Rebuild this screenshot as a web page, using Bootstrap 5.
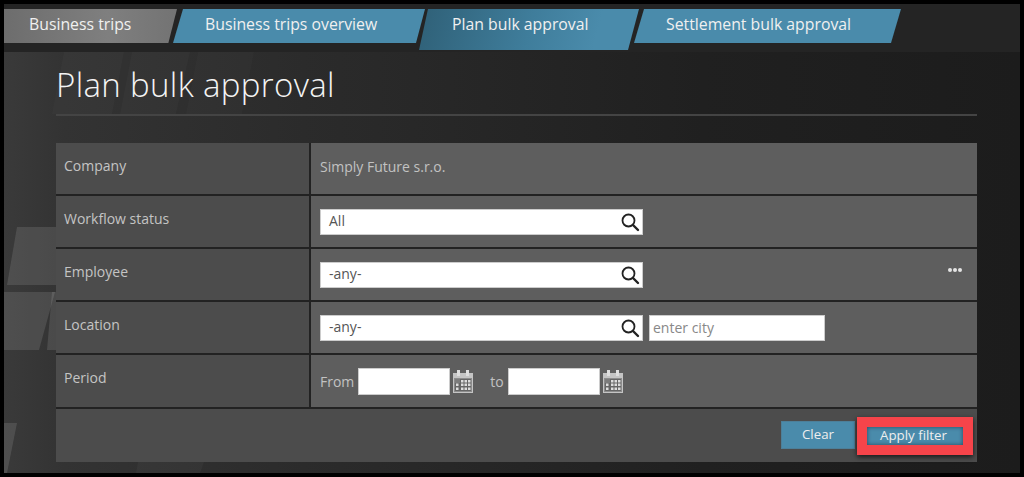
<!DOCTYPE html>
<html lang="en">
<head>
<meta charset="utf-8">
<title>Plan bulk approval</title>
<link href="https://cdn.jsdelivr.net/npm/bootstrap@5.3.0/dist/css/bootstrap.min.css" rel="stylesheet">
<style>
html,body{height:477px;overflow:hidden;background:#000}
body{font-family:"Open Sans","Liberation Sans",sans-serif;font-size:14px;padding:4px;}
.stage{position:relative;width:1016px;height:469px;background:linear-gradient(90deg,#3a3a3a 0,#333 60px,#2b2b2b 300px,#202020 700px,#1c1c1c 100%);overflow:hidden}
.deco{position:absolute;left:0;top:0}
.topband{position:relative;height:48px;background:#242424;padding-top:5px}
.tabstrip{display:flex;align-items:flex-start}
.tabitem{display:flex;align-items:center;height:34px;color:#f0f0f0;font-size:15.8px;text-decoration:none;padding-bottom:3px}
.tabgray{width:173px;padding-left:25px;background:linear-gradient(90deg,#6d6d6d,#7f7f7f 60%,#737373);clip-path:polygon(0 0,100% 0,95% 100%,0 100%)}
.tabblue{background:#4a8bab}
.tabb{width:252px;margin-left:-4px;padding-left:32px;clip-path:polygon(10px 0,100% 0,calc(100% - 9px) 100%,0 100%)}
.tabc{width:220px;height:41px;margin-left:-6px;padding-left:33px;padding-bottom:10px;background:linear-gradient(105deg,#2f6077,#3f7d9b 50%,#4a8bab 80%);clip-path:polygon(9px 0,100% 0,calc(100% - 11px) 100%,0 100%)}
.tabd{width:267px;margin-left:-5px;padding-left:32px;clip-path:polygon(10px 0,100% 0,calc(100% - 10px) 100%,0 100%)}
.mainarea{position:relative;padding:0 43px 0 52px}
.pagetitle{font-size:33px;font-weight:300;color:#f4f4f4;line-height:1;margin:0;padding-top:16px;height:64px;letter-spacing:.35px;border-bottom:2px solid #444}
.filterbox{margin-top:27px;display:flex;flex-direction:column;gap:2px;background:#222}
.frow{display:flex;gap:2px;height:51px}
.frow.tall{height:52px}
.flabel{width:253px;flex:none;background:#4c4c4c;color:#c4c4c4;padding:12px 0 0 8px}
.fvalue{flex:1;background:#5e5e5e;color:#c2c2c2;padding-left:9px;display:flex;align-items:center;position:relative}
.fvalue.plain{padding-bottom:4px}
.lookup{width:323px;height:26px;background:#fff;border:1px solid #ccc;display:flex;align-items:center;justify-content:space-between;padding:0 2px 0 8px;color:#555;flex:none}
.lookup span{margin-top:-2px}
.cityinput{width:176px;height:26px;margin-left:6px;background:#fff;border:1px solid #ccc;color:#888;padding:0 3px;line-height:24px}
.dateinput{width:92px;height:27px;background:#fff;border:1px solid #ccc;flex:none}
.dots{position:absolute;right:15px;top:19px;display:flex;gap:1px}
.dots i{display:block;width:4px;height:4px;border-radius:50%;background:#e4e4e4}
.footbar{height:53px;background:#4c4c4c;display:flex;justify-content:flex-end;align-items:flex-start;padding:12px 4px 0 0}
.actbtn{height:28px;border:1px solid #4d7f99;border-radius:0;background:#4a8bab;color:#eee;font-size:13.3px;padding:0;display:flex;align-items:center;justify-content:center}
.clearbtn{width:74px;margin-right:2px}
.applybtn{width:116px;height:38px;border:10px solid #f6444a;margin-top:-4px;padding-right:3px;box-shadow:0 2px 5px rgba(0,0,0,.7),inset 0 0 4px #27495c}
.todate{margin:0 4px 0 17px}
.calicon{margin-left:3px;flex:none}
</style>
</head>
<body>
<div class="stage">
  <svg class="deco" width="1016" height="469" aria-hidden="true">
    <g fill="#fff">
      <polygon points="60,48 120,48 108,110 48,110" opacity=".02"/>
      <polygon points="128,48 186,48 172,110 116,110" opacity=".02"/>
      <polygon points="194,48 250,48 238,110 182,110" opacity=".015"/>
      <polygon points="13,223 52,223 52,281 3,281" opacity=".11"/>
      <polygon points="0,288 51,288 35,346 0,346" opacity=".11"/>
      <polygon points="48,288 52,288 52,346 43,346" opacity=".11"/>
      <polygon points="0,419 13,419 3,469 0,469" opacity=".11"/>
      <polygon points="134,458 200,458 196,469 132,469" opacity=".03"/>
    </g>
    <defs>
      <g id="calglyph"><path d="M0 3h20v20H0z" fill="#c4c4c4"/><path d="M1 8h18v14H1z" fill="#8c8c8c"/><path d="M4 0h3v6H4zM13 0h3v6h-3z" fill="#ddd"/><path d="M2 9h16v12H2z" fill="#666"/><path d="M2 9h5v4H2z" fill="#7c7c7c"/><path d="M8 10h2.500v2.500H8zM11.500 10h2.500v2.500h-2.500zM15 10h2.500v2.500H15zM3 13.500h2.500v2.500H3zM8 13.500h2.500v2.500H8zM11.500 13.500h2.500v2.500h-2.500zM15 13.500h2.500v2.500H15zM3 17.500h2.500v2.500H3zM8 17.500h2.500v2.500H8zM11.500 17.500h2.500v2.500h-2.500zM15 17.500h2.500v2.500H15z" fill="#ddd"/></g>
    </defs>
  </svg>
  <div class="topband">
    <nav class="tabstrip">
      <a class="tabitem tabgray" href="#">Business trips</a>
      <a class="tabitem tabblue tabb" href="#">Business trips overview</a>
      <a class="tabitem tabc" href="#">Plan bulk approval</a>
      <a class="tabitem tabblue tabd" href="#">Settlement bulk approval</a>
    </nav>
  </div>
  <div class="mainarea">
    <h1 class="pagetitle">Plan bulk approval</h1>
    <div class="filterbox">
      <div class="frow"><div class="flabel">Company</div><div class="fvalue plain">Simply Future s.r.o.</div></div>
      <div class="frow"><div class="flabel">Workflow status</div><div class="fvalue"><div class="lookup"><span>All</span><svg width="20" height="20" viewBox="0 0 20 20"><circle cx="8.500" cy="8.500" r="6" fill="none" stroke="#222" stroke-width="1.800"/><path d="M13 13l5 5" stroke="#222" stroke-width="2.400" stroke-linecap="round"/></svg></div></div></div>
      <div class="frow"><div class="flabel">Employee</div><div class="fvalue"><div class="lookup"><span>-any-</span><svg width="20" height="20" viewBox="0 0 20 20"><circle cx="8.500" cy="8.500" r="6" fill="none" stroke="#222" stroke-width="1.800"/><path d="M13 13l5 5" stroke="#222" stroke-width="2.400" stroke-linecap="round"/></svg></div><div class="dots"><i></i><i></i><i></i></div></div></div>
      <div class="frow"><div class="flabel">Location</div><div class="fvalue"><div class="lookup"><span>-any-</span><svg width="20" height="20" viewBox="0 0 20 20"><circle cx="8.500" cy="8.500" r="6" fill="none" stroke="#222" stroke-width="1.800"/><path d="M13 13l5 5" stroke="#222" stroke-width="2.400" stroke-linecap="round"/></svg></div><div class="cityinput">enter city</div></div></div>
      <div class="frow tall"><div class="flabel">Period</div><div class="fvalue">
        <span class="me-1">From</span><div class="dateinput"></div>
        <svg class="calicon" width="20" height="23" viewBox="0 0 20 23"><use href="#calglyph"/></svg>
        <span class="todate">to</span><div class="dateinput"></div>
        <svg class="calicon" width="20" height="23" viewBox="0 0 20 23"><use href="#calglyph"/></svg>
      </div></div>
      <div class="footbar">
        <button type="button" class="btn actbtn clearbtn">Clear</button>
        <button type="button" class="btn actbtn applybtn">Apply filter</button>
      </div>
    </div>
  </div>
</div>
</body>
</html>
